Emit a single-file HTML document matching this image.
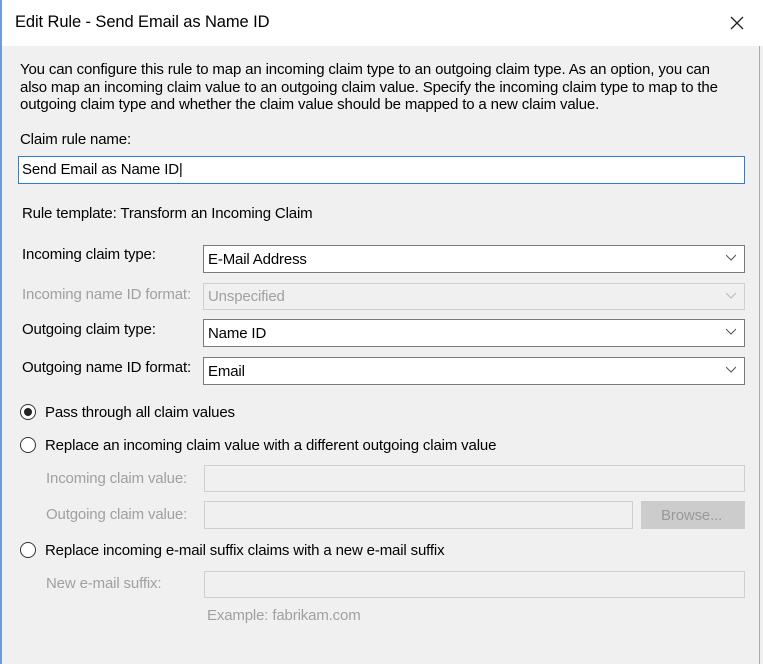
<!DOCTYPE html>
<html><head><style>
*{box-sizing:border-box;margin:0;padding:0}
body{width:763px;height:664px;background:#f0f0f0;font-family:"Liberation Sans",sans-serif;font-size:15px;color:#000;position:relative;overflow:hidden}
.a{position:absolute;white-space:nowrap}
.title{left:0;top:0;width:763px;height:46px;background:#fff;border-left:2px solid #6d9cd6;}
.body{left:0;top:46px;width:760px;height:618px;border-left:2px solid #6d9cd6;border-right:1px solid #aaa}
.box{position:absolute;background:#fff;border:1px solid #7a7a7a}
.dis{background:#f0f0f0;border:1px solid #cfcfcf}
.g{color:#a0a0a0}
.chev{position:absolute;right:8px;top:8px;width:10px;height:8px}
.radio{position:absolute;width:16px;height:16px;border:1px solid #333;border-radius:50%;background:#fff}
.radio.on::after{content:"";position:absolute;left:3px;top:3px;width:8px;height:8px;border-radius:50%;background:#222}
.t{letter-spacing:-0.15px}
</style></head><body>
<div class="a title"></div>
<div class="a" style="left:15px;top:13px;font-size:16.5px;letter-spacing:-0.1px">Edit Rule - Send Email as Name ID</div>
<svg class="a" style="left:730px;top:16px" width="14" height="14"><path d="M1 1L13 13M13 1L1 13" stroke="#222" stroke-width="1.3"/></svg>
<div class="a body"></div>
<div class="a t" style="left:20px;top:61px;line-height:17.5px">You can configure this rule to map an incoming claim type to an outgoing claim type. As an option, you can<br>also map an incoming claim value to an outgoing claim value. Specify the incoming claim type to map to the<br>outgoing claim type and whether the claim value should be mapped to a new claim value.</div>
<div class="a t" style="left:20px;top:131px">Claim rule name:</div>
<div class="box" style="left:18px;top:156px;width:727px;height:28px;border:1px solid #2c7dd6"></div>
<div class="a t" style="left:22px;top:161px">Send Email as Name ID|</div>
<div class="a t" style="left:22px;top:205px">Rule template: Transform an Incoming Claim</div>

<div class="a t" style="left:22px;top:246px">Incoming claim type:</div>
<div class="box" style="left:203px;top:245px;width:542px;height:28px"><span class="a t" style="left:4px;top:5px">E-Mail Address</span><svg class="chev"><path d="M0 1L5 6L10 1" fill="none" stroke="#555"/></svg></div>
<div class="a t g" style="left:22px;top:286px">Incoming name ID format:</div>
<div class="box dis" style="left:203px;top:283px;width:542px;height:27px"><span class="a t g" style="left:4px;top:4px">Unspecified</span><svg class="chev"><path d="M0 1L5 6L10 1" fill="none" stroke="#bbb"/></svg></div>
<div class="a t" style="left:22px;top:321px">Outgoing claim type:</div>
<div class="box" style="left:203px;top:319px;width:542px;height:28px"><span class="a t" style="left:4px;top:5px">Name ID</span><svg class="chev"><path d="M0 1L5 6L10 1" fill="none" stroke="#555"/></svg></div>
<div class="a t" style="left:22px;top:359px">Outgoing name ID format:</div>
<div class="box" style="left:203px;top:357px;width:542px;height:28px"><span class="a t" style="left:4px;top:5px">Email</span><svg class="chev"><path d="M0 1L5 6L10 1" fill="none" stroke="#555"/></svg></div>

<div class="radio on" style="left:20px;top:404px"></div>
<div class="a t" style="left:45px;top:404px">Pass through all claim values</div>
<div class="radio" style="left:20px;top:437px"></div>
<div class="a t" style="left:45px;top:437px">Replace an incoming claim value with a different outgoing claim value</div>
<div class="a t g" style="left:46px;top:470px">Incoming claim value:</div>
<div class="box dis" style="left:204px;top:465px;width:541px;height:27px"></div>
<div class="a t g" style="left:46px;top:506px">Outgoing claim value:</div>
<div class="box dis" style="left:204px;top:501px;width:429px;height:28px"></div>
<div class="box" style="left:641px;top:501px;width:104px;height:28px;background:#ccc;border-color:#ccc"><span class="a t g" style="left:19px;top:5px;color:#999">Browse...</span></div>
<div class="radio" style="left:20px;top:542px"></div>
<div class="a t" style="left:45px;top:542px">Replace incoming e-mail suffix claims with a new e-mail suffix</div>
<div class="a t g" style="left:46px;top:575px">New e-mail suffix:</div>
<div class="box dis" style="left:204px;top:571px;width:541px;height:27px"></div>
<div class="a t g" style="left:207px;top:607px">Example: fabrikam.com</div>
</body></html>
